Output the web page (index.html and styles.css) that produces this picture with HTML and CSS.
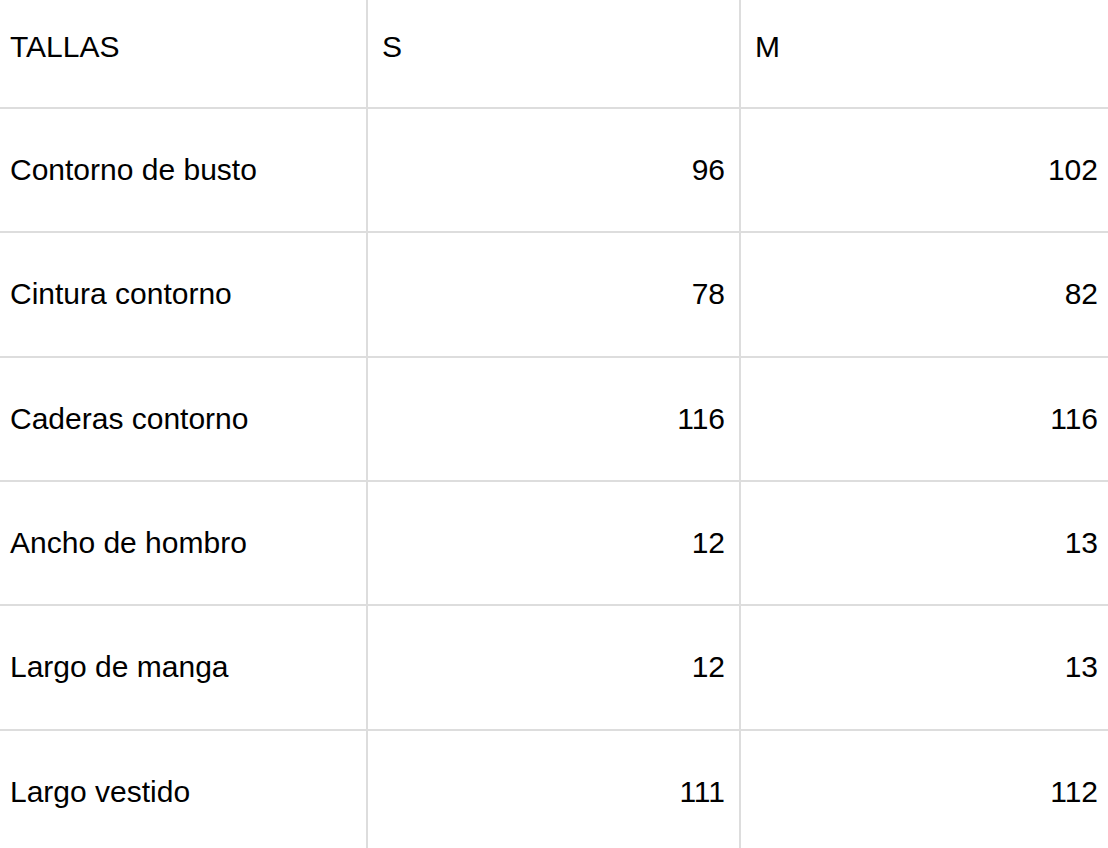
FILE: index.html
```html
<!DOCTYPE html>
<html lang="es">
<head>
<meta charset="utf-8">
<title>Tallas</title>
<link rel="stylesheet" href="styles.css">
</head>
<body>
<div class="sizes">
  <div class="cell head">TALLAS</div>
  <div class="cell head">S</div>
  <div class="cell head">M</div>

  <div class="cell">Contorno de busto</div>
  <div class="cell num">96</div>
  <div class="cell num">102</div>

  <div class="cell">Cintura contorno</div>
  <div class="cell num">78</div>
  <div class="cell num">82</div>

  <div class="cell">Caderas contorno</div>
  <div class="cell num">116</div>
  <div class="cell num">116</div>

  <div class="cell">Ancho de hombro</div>
  <div class="cell num">12</div>
  <div class="cell num">13</div>

  <div class="cell">Largo de manga</div>
  <div class="cell num">12</div>
  <div class="cell num">13</div>

  <div class="cell">Largo vestido</div>
  <div class="cell num">111</div>
  <div class="cell num">112</div>
</div>
</body>
</html>
```

FILE: styles.css
```css
html, body {
  margin: 0;
  padding: 0;
  overflow: hidden;
  background: #ffffff;
}

body {
  font-family: "Liberation Sans", Arial, sans-serif;
  font-size: 30px;
  color: #000000;
}

.sizes {
  display: grid;
  grid-template-columns: 366px 371px 371px;
  grid-template-rows: 107px repeat(6, 122.33px);
  gap: 2px;
  background: #dddddd;
  width: 1112px;
}

.cell {
  background: #ffffff;
  display: flex;
  align-items: center;
  padding: 0 14px;
}

.cell:nth-child(3n+1) {
  padding-left: 10px;
}

.head {
  padding-bottom: 14px;
}

.num {
  justify-content: flex-end;
}
```
